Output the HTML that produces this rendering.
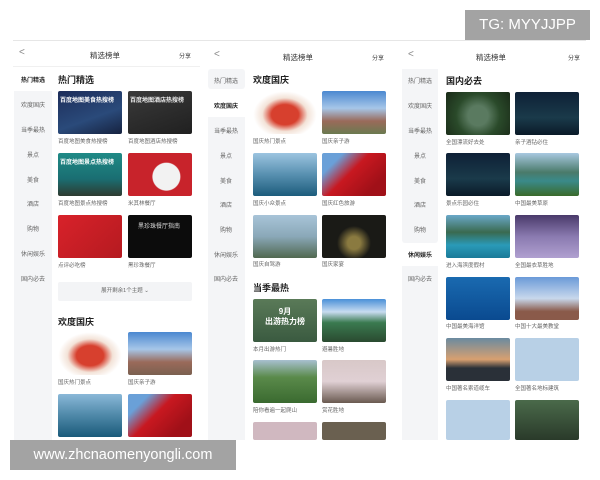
<!DOCTYPE html>
<html><head><meta charset="utf-8"><style>
*{margin:0;padding:0;box-sizing:border-box}
body{width:600px;height:480px;background:#fff;position:relative;overflow:hidden;font-family:"Liberation Sans","Noto Sans CJK SC",sans-serif;color:#333}
.a{position:absolute;white-space:nowrap}
.sb{position:absolute;background:#f4f5f7}
.si{position:absolute;font-size:6px;color:#666;text-align:center;width:38px}
.h{position:absolute;font-size:9px;font-weight:bold;color:#222}
.im{position:absolute;width:64px;height:43px;border-radius:2px;overflow:hidden}
.cap{position:absolute;font-size:5.5px;color:#666;white-space:nowrap}
.tt{position:absolute;font-size:7.5px;color:#333}
.sh{position:absolute;font-size:6px;color:#444}
.bk{position:absolute;font-size:10px;color:#888}
</style></head><body>
<div class="a" style="left:13px;top:40px;width:573px;height:1px;background:#e6e6e6"></div>
<div class="a" style="left:465px;top:10px;width:125px;height:30px;background:#a3a3a3;color:#fff;font-size:15px;line-height:30px;text-align:center">TG: MYYJJPP</div>

<!-- Panel 1 -->
<div class="bk" style="left:19px;top:47px">&lt;</div>
<div class="tt" style="left:90px;top:50px">精选榜单</div>
<div class="sh" style="left:179px;top:51px">分享</div>
<div class="a" style="left:13px;top:66px;width:187px;height:1px;background:#f0f0f0"></div>
<div class="sb" style="left:14px;top:91px;width:38px;height:349px"></div>
<div class="si" style="left:14px;top:75px;color:#222;font-weight:bold">热门精选</div>
<div class="si" style="left:14px;top:100px">欢度国庆</div>
<div class="si" style="left:14px;top:125px">当季最热</div>
<div class="si" style="left:14px;top:150px">景点</div>
<div class="si" style="left:14px;top:175px">美食</div>
<div class="si" style="left:14px;top:199px">酒店</div>
<div class="si" style="left:14px;top:224px">购物</div>
<div class="si" style="left:14px;top:249px">休闲娱乐</div>
<div class="si" style="left:14px;top:274px">国内必去</div>
<div class="h" style="left:58px;top:73px">热门精选</div>
<div class="im" style="left:58px;top:91px;background:linear-gradient(160deg,#1d2d5a,#2a4a7a 60%,#16223f)"><div style="color:#fff;font-size:6px;font-weight:bold;padding:4px 2px">百度地图美食热搜榜</div></div>
<div class="im" style="left:128px;top:91px;background:linear-gradient(160deg,#3a3a3a,#202020)"><div style="color:#eee;font-size:6px;font-weight:bold;padding:4px 2px">百度地图酒店热搜榜</div></div>
<div class="cap" style="left:58px;top:137px">百度地图美食热搜榜</div>
<div class="cap" style="left:128px;top:137px">百度地图酒店热搜榜</div>
<div class="im" style="left:58px;top:153px;background:linear-gradient(180deg,#1f8a86,#1a6e72 60%,#2e3a30)"><div style="color:#fff;font-size:6px;font-weight:bold;padding:4px 2px">百度地图景点热搜榜</div></div>
<div class="im" style="left:128px;top:153px;background:radial-gradient(circle at 60% 55%,#f2f2f2 0 30%,#c8232b 32%)"></div>
<div class="cap" style="left:58px;top:199px">百度地图景点热搜榜</div>
<div class="cap" style="left:128px;top:199px">米其林餐厅</div>
<div class="im" style="left:58px;top:215px;background:linear-gradient(135deg,#d8222a,#b51a20)"></div>
<div class="im" style="left:128px;top:215px;background:#0c0c0c"><div style="color:#ddd;font-size:6px;padding:6px 10px">黑珍珠餐厅指南</div></div>
<div class="cap" style="left:58px;top:261px">点评必吃榜</div>
<div class="cap" style="left:128px;top:261px">黑珍珠餐厅</div>
<div class="a" style="left:58px;top:282px;width:134px;height:19px;background:#f3f4f6;border-radius:2px;font-size:5.5px;color:#666;text-align:center;line-height:19px">展开剩余1个主题 ⌄</div>
<div class="h" style="left:58px;top:315px">欢度国庆</div>
<div class="im" style="left:58px;top:332px;background:radial-gradient(ellipse at 50% 55%,#d7402e 0 30%,#f3e3d8 50%,#fff 70%)"></div>
<div class="im" style="left:128px;top:332px;background:linear-gradient(180deg,#4a88d0,#a6c6e8 40%,#9a6a5a 70%,#7a6050)"></div>
<div class="cap" style="left:58px;top:378px">国庆热门景点</div>
<div class="cap" style="left:128px;top:378px">国庆亲子游</div>
<div class="im" style="left:58px;top:394px;background:linear-gradient(180deg,#8ab8d8,#4e88a8 50%,#1a5a7a)"></div>
<div class="im" style="left:128px;top:394px;background:linear-gradient(135deg,#6aa0d8 20%,#c81820 45%,#a01018 80%)"></div>

<!-- Panel 2 -->
<div class="bk" style="left:214px;top:49px">&lt;</div>
<div class="tt" style="left:283px;top:52px">精选榜单</div>
<div class="sh" style="left:372px;top:53px">分享</div>
<div class="sb" style="left:208px;top:69px;width:37px;height:20px;border-radius:3px"></div>
<div class="sb" style="left:208px;top:117px;width:37px;height:323px"></div>
<div class="si" style="left:207px;top:76px">热门精选</div>
<div class="si" style="left:207px;top:101px;color:#222;font-weight:bold">欢度国庆</div>
<div class="si" style="left:207px;top:126px">当季最热</div>
<div class="si" style="left:207px;top:151px">景点</div>
<div class="si" style="left:207px;top:176px">美食</div>
<div class="si" style="left:207px;top:200px">酒店</div>
<div class="si" style="left:207px;top:225px">购物</div>
<div class="si" style="left:207px;top:250px">休闲娱乐</div>
<div class="si" style="left:207px;top:274px">国内必去</div>
<div class="h" style="left:253px;top:73px">欢度国庆</div>
<div class="im" style="left:253px;top:91px;background:radial-gradient(ellipse at 50% 55%,#d7402e 0 30%,#f3e3d8 50%,#fff 70%)"></div>
<div class="im" style="left:322px;top:91px;background:linear-gradient(180deg,#4a88d0,#a6c6e8 40%,#9a6a5a 70%,#6a7a50)"></div>
<div class="cap" style="left:253px;top:137px">国庆热门景点</div>
<div class="cap" style="left:322px;top:137px">国庆亲子游</div>
<div class="im" style="left:253px;top:153px;background:linear-gradient(180deg,#9cc4e0,#5890b0 50%,#1c5c7c)"></div>
<div class="im" style="left:322px;top:153px;background:linear-gradient(135deg,#6aa0d8 20%,#c81820 45%,#a01018 80%)"></div>
<div class="cap" style="left:253px;top:199px">国庆小众景点</div>
<div class="cap" style="left:322px;top:199px">国庆红色旅游</div>
<div class="im" style="left:253px;top:215px;background:linear-gradient(180deg,#a8c4d8,#8aa8b8 50%,#506850)"></div>
<div class="im" style="left:322px;top:215px;background:radial-gradient(circle at 50% 65%,#8a7a40 0 15%,#1a1a16 40%)"></div>
<div class="cap" style="left:253px;top:260px">国庆自驾游</div>
<div class="cap" style="left:322px;top:260px">国庆家宴</div>
<div class="h" style="left:253px;top:281px">当季最热</div>
<div class="im" style="left:253px;top:299px;background:linear-gradient(180deg,#5a7a58,#3a5a40)"><div style="color:#fff;font-size:8px;font-weight:bold;text-align:center;padding-top:8px;line-height:10px">9月<br>出游热力榜</div></div>
<div class="im" style="left:322px;top:299px;background:linear-gradient(180deg,#4a90d8,#c8dcf0 30%,#3a7a50 55%,#2a4a30)"></div>
<div class="cap" style="left:253px;top:345px">本月出游热门</div>
<div class="cap" style="left:322px;top:345px">避暑胜地</div>
<div class="im" style="left:253px;top:360px;background:linear-gradient(180deg,#a8c0d0,#5a8a4a 40%,#3a6a30)"></div>
<div class="im" style="left:322px;top:360px;background:linear-gradient(180deg,#d8c8c8,#e0d0d4 50%,#6a5a50)"></div>
<div class="cap" style="left:253px;top:406px">陪你看遍一起爬山</div>
<div class="cap" style="left:322px;top:406px">赏花胜地</div>
<div class="im" style="left:253px;top:422px;height:18px;background:#d0b8c0"></div>
<div class="im" style="left:322px;top:422px;height:18px;background:#6a6050"></div>

<!-- Panel 3 -->
<div class="bk" style="left:408px;top:49px">&lt;</div>
<div class="tt" style="left:476px;top:52px">精选榜单</div>
<div class="sh" style="left:568px;top:53px">分享</div>
<div class="sb" style="left:402px;top:69px;width:36px;height:174px;border-radius:0 0 3px 3px"></div>
<div class="sb" style="left:402px;top:266px;width:36px;height:174px"></div>
<div class="si" style="left:401px;top:76px">热门精选</div>
<div class="si" style="left:401px;top:101px">欢度国庆</div>
<div class="si" style="left:401px;top:126px">当季最热</div>
<div class="si" style="left:401px;top:151px">景点</div>
<div class="si" style="left:401px;top:176px">美食</div>
<div class="si" style="left:401px;top:200px">酒店</div>
<div class="si" style="left:401px;top:225px">购物</div>
<div class="si" style="left:401px;top:250px;color:#222;font-weight:bold">休闲娱乐</div>
<div class="si" style="left:401px;top:274px">国内必去</div>
<div class="h" style="left:446px;top:74px">国内必去</div>
<div class="im" style="left:446px;top:92px;background:radial-gradient(circle at 50% 55%,#5a7a60 0 25%,#2a4a2a 55%,#1a2a18)"></div>
<div class="im" style="left:515px;top:92px;background:linear-gradient(180deg,#0e2036,#1a3a4a 60%,#0a1a28)"></div>
<div class="cap" style="left:446px;top:138px">全国漂流好去处</div>
<div class="cap" style="left:515px;top:138px">亲子酒钻必住</div>
<div class="im" style="left:446px;top:153px;background:linear-gradient(180deg,#0e2036,#1a3a4a 60%,#0a1a28)"></div>
<div class="im" style="left:515px;top:153px;background:linear-gradient(180deg,#a8c8e0,#4a7a6a 45%,#3a8a8a 65%,#3a6a2a)"></div>
<div class="cap" style="left:446px;top:199px">景点乐园必住</div>
<div class="cap" style="left:515px;top:199px">中国最美草原</div>
<div class="im" style="left:446px;top:215px;background:linear-gradient(180deg,#6aa8c8,#3a6a50 40%,#2a9ab8 70%,#1a7a98)"></div>
<div class="im" style="left:515px;top:215px;background:linear-gradient(180deg,#4a3a6a,#8a7ab0 50%,#b0a0d0)"></div>
<div class="cap" style="left:446px;top:261px">进入海滨度假村</div>
<div class="cap" style="left:515px;top:261px">全国最衣草胜地</div>
<div class="im" style="left:446px;top:277px;background:linear-gradient(180deg,#1a6ab0,#0a4a90)"></div>
<div class="im" style="left:515px;top:277px;background:linear-gradient(180deg,#6a9ad8,#c8d8ec 50%,#8a5a4a 80%)"></div>
<div class="cap" style="left:446px;top:322px">中国最美海洋馆</div>
<div class="cap" style="left:515px;top:322px">中国十大最美教堂</div>
<div class="im" style="left:446px;top:338px;background:linear-gradient(180deg,#6a8aa0,#d8a070 50%,#2a3038 70%)"></div>
<div class="im" style="left:515px;top:338px;background:#b8d0e6"></div>
<div class="cap" style="left:446px;top:384px">中国著名索道缆车</div>
<div class="cap" style="left:515px;top:384px">全国著名地标建筑</div>
<div class="im" style="left:446px;top:400px;height:40px;background:#b8d0e6"></div>
<div class="im" style="left:515px;top:400px;height:40px;background:linear-gradient(180deg,#4a6a4a,#2a3a2a)"></div>

<div class="a" style="left:10px;top:440px;width:226px;height:30px;background:#a3a3a3;color:#fff;font-size:14.5px;line-height:30px;text-align:center">www.zhcnaomenyongli.com</div>
</body></html>
